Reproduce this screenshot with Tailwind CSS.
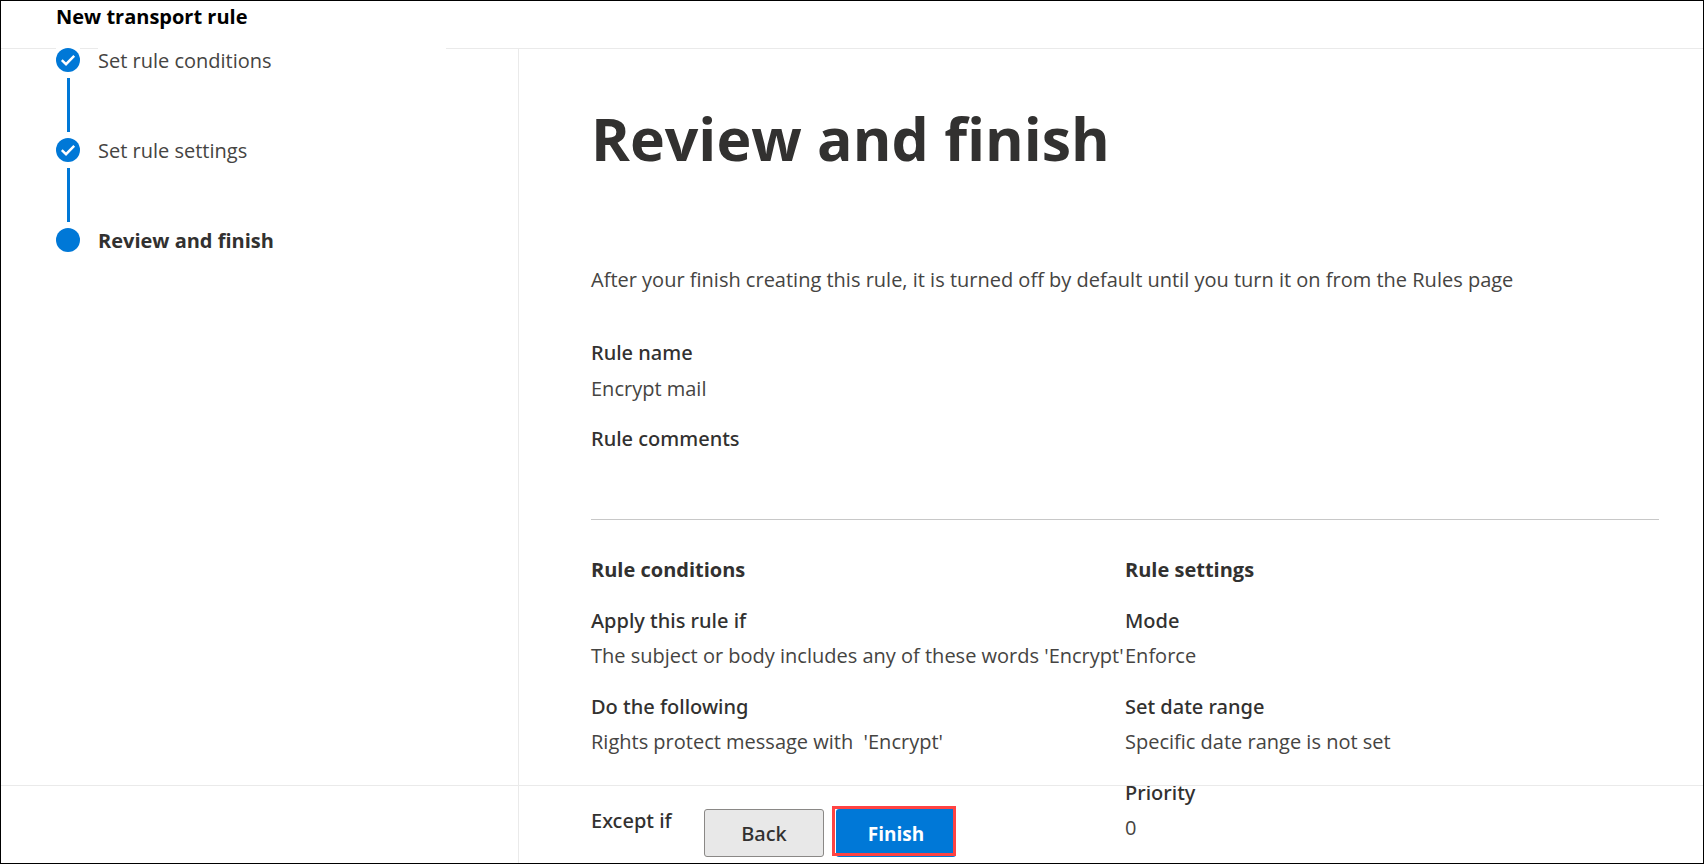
<!DOCTYPE html>
<html lang="en">
<head>
<meta charset="utf-8">
<meta name="viewport" content="width=device-width, initial-scale=1">
<title>New transport rule</title>
<script src="https://cdn.jsdelivr.net/npm/@tailwindcss/browser@4"></script>
</head>
<body class="relative flex h-screen flex-col overflow-hidden border border-black bg-white font-['Segoe_UI','Open_Sans','Noto_Sans',sans-serif] text-[20px] leading-7 text-[#323130]">
  <header class="h-12 shrink-0 border-b border-[#eaeaea] pl-[55px]">
    <h2 class="font-bold leading-8 text-black">New transport rule</h2>
  </header>

  <div class="flex min-h-0 flex-1">
    <nav aria-label="Steps" class="-mt-px w-[518px] shrink-0 border-r border-[#eaeaea] pl-[55px] pr-[72px]">
      <ol class="leading-[26px]">
        <li class="flex h-[90px]">
          <div class="flex w-6 flex-col items-center gap-1.5 bg-white">
            <svg class="size-6" viewBox="0 0 24 24" aria-hidden="true"><circle cx="12" cy="12" r="12" fill="#0078d7"/><path d="M5.8 12.2l4.2 4 8.2-8.4" fill="none" stroke="#fff" stroke-width="2.4"/></svg>
            <div class="h-[54px] w-[3px] bg-[#0078d7]"></div>
          </div>
          <a href="#conditions" class="ml-[18px] h-7 flex-1 bg-white text-[#454442]">Set rule conditions</a>
        </li>
        <li class="flex h-[90px]">
          <div class="flex w-6 flex-col items-center gap-1.5">
            <svg class="size-6" viewBox="0 0 24 24" aria-hidden="true"><circle cx="12" cy="12" r="12" fill="#0078d7"/><path d="M5.8 12.2l4.2 4 8.2-8.4" fill="none" stroke="#fff" stroke-width="2.4"/></svg>
            <div class="h-[54px] w-[3px] bg-[#0078d7]"></div>
          </div>
          <a href="#settings" class="ml-[18px] h-7 text-[#454442]">Set rule settings</a>
        </li>
        <li class="flex">
          <div class="size-6 rounded-full bg-[#0078d7]"></div>
          <a href="#review" aria-current="step" class="ml-[18px] h-7 font-bold">Review and finish</a>
        </li>
      </ol>
    </nav>

    <main class="min-w-0 flex-1 pl-[72px] pr-11 pt-[49px]">
      <h1 class="text-[59px] font-bold leading-20">Review and finish</h1>
      <p class="mt-[88px] text-[#454442]">After your finish creating this rule, it is turned off by default until you turn it on from the Rules page</p>
      <dl class="mt-[45px]">
        <dt class="font-['Segoe_UI','Noto_Sans',sans-serif] font-medium">Rule name</dt>
        <dd class="mt-2 text-[#454442]">Encrypt mail</dd>
        <dt class="mt-[22px] font-['Segoe_UI','Noto_Sans',sans-serif] font-medium">Rule comments</dt>
        <dd></dd>
      </dl>
      <hr class="mt-[66px] border-[#c8c8c8]">
      <div class="mt-9 grid grid-cols-2">
        <section>
          <h3 class="font-bold">Rule conditions</h3>
          <dl class="whitespace-nowrap">
            <dt class="mt-[23px] font-['Segoe_UI','Noto_Sans',sans-serif] font-medium">Apply this rule if</dt>
            <dd class="mt-[7px] text-[#454442]">The subject or body includes any of these words 'Encrypt'</dd>
            <dt class="mt-[23px] font-['Segoe_UI','Noto_Sans',sans-serif] font-medium">Do the following</dt>
            <dd class="mt-[7px] whitespace-pre text-[#454442]">Rights protect message with  'Encrypt'</dd>
            <dt class="mt-[51px] font-['Segoe_UI','Noto_Sans',sans-serif] font-medium">Except if</dt>
          </dl>
        </section>
        <section>
          <h3 class="font-bold">Rule settings</h3>
          <dl>
            <dt class="mt-[23px] font-['Segoe_UI','Noto_Sans',sans-serif] font-medium">Mode</dt>
            <dd class="mt-[7px] text-[#454442]">Enforce</dd>
            <dt class="mt-[23px] font-['Segoe_UI','Noto_Sans',sans-serif] font-medium">Set date range</dt>
            <dd class="mt-[7px] text-[#454442]">Specific date range is not set</dd>
            <dt class="mt-[23px] font-['Segoe_UI','Noto_Sans',sans-serif] font-medium">Priority</dt>
            <dd class="mt-[7px] text-[#454442]">0</dd>
          </dl>
        </section>
      </div>
    </main>
  </div>

  
  <footer class="absolute inset-x-0 bottom-0 flex h-[78px] items-start gap-3 border-t border-[#eaeaea] pl-[703px] pt-[23px]">
    <button type="button" class="h-12 w-[120px] rounded-[3px] border border-[#8a8886] bg-[#e8e8e8] pt-px font-['Segoe_UI','Noto_Sans',sans-serif] font-medium">Back</button>
    <div class="relative">
      <button type="button" class="h-12 w-[120px] rounded-[3px] bg-[#0078d7] pt-px text-[19px] font-bold text-white">Finish</button>
      <span class="pointer-events-none absolute -left-1 -top-[3px] h-[50px] w-[124px] border-3 border-[#ff4343]"></span>
    </div>
  </footer>
</body>
</html>
